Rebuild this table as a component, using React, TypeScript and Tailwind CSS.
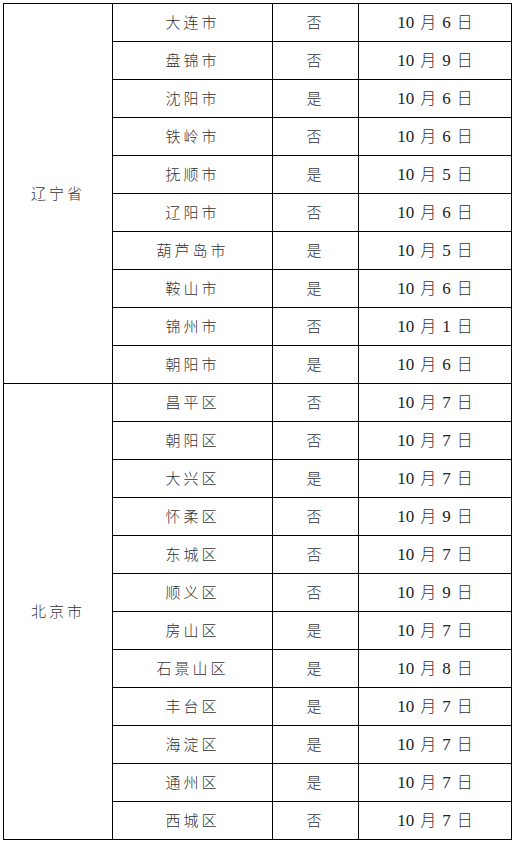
import React from "react";

type Row = [string, string, string];

const liaoning: Row[] = [
  ["大连市", "否", "6"],
  ["盘锦市", "否", "9"],
  ["沈阳市", "是", "6"],
  ["铁岭市", "否", "6"],
  ["抚顺市", "是", "5"],
  ["辽阳市", "否", "6"],
  ["葫芦岛市", "是", "5"],
  ["鞍山市", "是", "6"],
  ["锦州市", "否", "1"],
  ["朝阳市", "是", "6"],
];

const beijing: Row[] = [
  ["昌平区", "否", "7"],
  ["朝阳区", "否", "7"],
  ["大兴区", "是", "7"],
  ["怀柔区", "否", "9"],
  ["东城区", "否", "7"],
  ["顺义区", "否", "9"],
  ["房山区", "是", "7"],
  ["石景山区", "是", "8"],
  ["丰台区", "是", "7"],
  ["海淀区", "是", "7"],
  ["通州区", "是", "7"],
  ["西城区", "否", "7"],
];

const cjk = "font-['Noto_Sans_CJK_SC',sans-serif] font-light text-[15px] tracking-[3px] text-[#333]";
const cell = "border-[1.5px] border-black text-center align-middle p-0";

function Group({ name, rows }: { name: string; rows: Row[] }) {
  return (
    <>
      {rows.map((r, i) => (
        <tr key={r[0]} className="h-[38px]">
          {i === 0 && (
            <td rowSpan={rows.length} className={`${cell} ${cjk}`}>
              {name}
            </td>
          )}
          <td className={`${cell} ${cjk}`}>{r[0]}</td>
          <td className={`${cell} ${cjk}`}>{r[1]}</td>
          <td className={`${cell} font-['Liberation_Serif','Noto_Serif_CJK_SC','Noto_Sans_CJK_SC',serif] text-[17px] text-[#222]`}>
            10<span className="font-['Noto_Sans_CJK_SC',sans-serif] font-light text-[16px] text-[#333] mx-[6px]">月</span>
            {r[2]}
            <span className="font-['Noto_Sans_CJK_SC',sans-serif] font-light text-[16px] text-[#333] ml-[6px]">日</span>
          </td>
        </tr>
      ))}
    </>
  );
}

export default function App() {
  return (
    <div className="w-[517px] h-[842px] bg-white pt-[3px] pl-[3px]">
      <table className="table-fixed border-collapse w-[508px]">
        <colgroup>
          <col className="w-[109px]" />
          <col className="w-[160px]" />
          <col className="w-[86px]" />
          <col className="w-[153px]" />
        </colgroup>
        <tbody>
          <Group name="辽宁省" rows={liaoning} />
          <Group name="北京市" rows={beijing} />
        </tbody>
      </table>
    </div>
  );
}
